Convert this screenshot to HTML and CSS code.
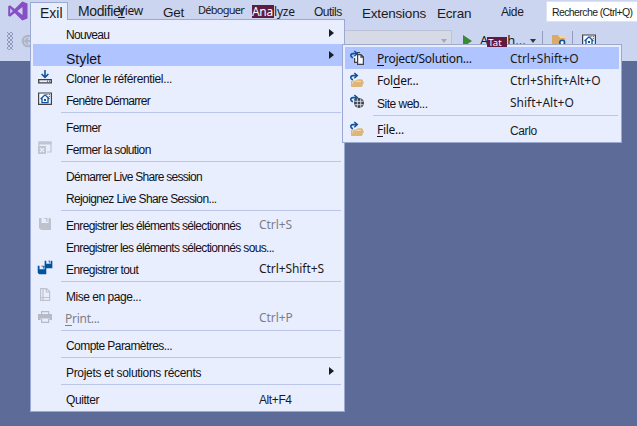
FILE: index.html
```html
<!DOCTYPE html>
<html lang="fr">
<head>
<meta charset="utf-8">
<title>Visual Studio</title>
<link rel="stylesheet" href="styles.css">
</head>
<body>
<svg class="defs" width="0" height="0" aria-hidden="true">
  <symbol id="home" viewBox="0 0 16 16"><path d="M1.6 2h12.8v11.4H1.6z" fill="#f6f8ff" stroke="#424247" stroke-width="1.2"/><path d="M9.5 3.5h1M11.8 3.5h1M11.8 5.4h1" stroke="#424247"/><path d="M3.6 8 8 3.8 12.4 8M5 7.2v4.5h6V7.2" fill="none" stroke="#0f539c" stroke-width="1.3"/><path d="M7 8h2v2H7z" fill="#0f539c"/></symbol>
  <symbol id="folder" viewBox="0 0 16 16"><path d="M2.5 9v5h10V8H8L7 9.2z" fill="#efd5ad" stroke="#dcb67a"/><path d="M4.5 10H15l-2 5H2z" fill="#dcb67a"/><path d="M9 8h4.5v3" fill="none" stroke="#dcb67a"/></symbol>
  <symbol id="open" viewBox="0 0 16 16"><path d="M4 7.6C1 7 1.2 3.6 4 3.6H7.4" fill="none" stroke="#0f539c" stroke-width="1.6"/><path d="M5.3 1l3 2.6-3 2.6" fill="none" stroke="#0f539c" stroke-width="1.5"/></symbol>
  <symbol id="floppy" viewBox="0 0 14 14"><path d="M1 1h2.5v5h7V1H12l1 1v11H3l-2-2z"/><path d="M6.2 1h3.3v4H8.3V2H6.2z"/></symbol>
</svg>
<header class="shell">
  <nav class="menubar">
    <svg class="logo" viewBox="0 0 20 20"><path fill="#864fc4" fill-rule="evenodd" d="M14.3.5 19.5 2.6V17.4L14.3 19.5 6.7 12.1 2 15.8.2 14.8V5.2L2 4.2 6.7 7.9zM14.5 6 9.4 10l5.1 4zM2.2 7.3v5.4L4.9 10z"/></svg>
    <span class="tab exil">Exil</span>
    <span class="tab modifier">Modifier</span>
    <span class="tab view"><u>V</u>iew</span>
    <span class="tab get">Get</span>
    <span class="tab debug">Déboguer</span>
    <span class="tab analyze"><b>Ana</b>lyze</span>
    <span class="tab outils">Outils</span>
    <span class="tab ext">Extensions</span>
    <span class="tab ecran">Ecran</span>
    <span class="tab aide">Aide</span>
    <span class="search">Recherche (Ctrl+Q)</span>
  </nav>
  <div class="toolbar">
    <span class="grip"></span>
    <svg class="back" viewBox="0 0 14 14"><circle cx="7" cy="7" r="5.2" fill="none" stroke="#b0b4c4" stroke-width="2.2"/><path d="M11 7H4m3-3L4 7l3 3" fill="none" stroke="#b0b4c4" stroke-width="1.8"/></svg>
    <span class="combo"><i class="down"></i></span>
    <i class="play"></i>
    <span class="attach">A<b>Tat</b>h...</span>
    <i class="down dark"></i>
    <i class="vline"></i>
    <svg class="tool" viewBox="0 0 16 16"><path d="M1 2h6l1 2h6v11H1z" fill="#d9ab66"/><path d="M9 3h5v2H9z" fill="#efd5ad"/><circle cx="11.2" cy="9.6" r="2.4" fill="#fff" stroke="#0f539c" stroke-width="1.6"/></svg>
    <i class="vline"></i>
    <svg class="tool"><use href="#home"/></svg>
  </div>
</header>

<section class="menu main">
  <div class="row"><span class="ico"></span><span class="label t-nouveau">Nouveau</span><i class="arrow"></i></div>
  <div class="row on"><span class="ico"></span><span class="label t-stylet">Stylet</span><i class="arrow"></i></div>
  <div class="row"><svg class="ico" viewBox="0 0 16 16"><path d="M8 1v7M4.6 5 8 8.4 11.4 5" fill="none" stroke="#0f539c" stroke-width="1.6"/><path d="M1.7 10.6h12.6v3.2H1.7z" fill="none" stroke="#424247" stroke-width="1.3"/><path d="M10 12.2h1m1 0h1" stroke="#424247"/></svg><span class="label t-cloner">Cloner le référentiel...</span></div>
  <div class="row"><svg class="ico"><use href="#home"/></svg><span class="label t-tight">Fenêtre Démarrer</span></div>
  <hr>
  <div class="row"><span class="ico"></span><span class="label">Fermer</span></div>
  <div class="row"><svg class="ico" viewBox="0 0 16 16"><path d="M2 6V2h12v10h-4" fill="none" stroke="#c2c4cf" stroke-width="1.2"/><path d="M1.5 1.5h13v3h-13z" fill="#c2c4cf"/><path d="M1 6h8v8H1z" fill="#c2c4cf"/><path d="m3 8 4 4m0-4-4 4" stroke="#e9eeff" stroke-width="1.3"/></svg><span class="label">Fermer la solution</span></div>
  <hr>
  <div class="row"><span class="ico"></span><span class="label t-live">Démarrer Live Share session</span></div>
  <div class="row"><span class="ico"></span><span class="label">Rejoignez Live Share Session...</span></div>
  <hr>
  <div class="row off"><svg class="ico" viewBox="0 0 16 16"><use href="#floppy" x="1" y="1" width="14" height="14" fill="#bfc2cd"/></svg><span class="label t-black">Enregistrer les éléments sélectionnés</span><span class="key">Ctrl+S</span></div>
  <div class="row"><span class="ico"></span><span class="label t-black">Enregistrer les éléments sélectionnés sous...</span></div>
  <div class="row"><svg class="ico" viewBox="0 0 16 16"><use href="#floppy" x="7" y="0" width="9" height="9" fill="#00539c"/><use href="#floppy" x="0" y="5" width="10" height="10" fill="#00539c"/></svg><span class="label t-tout">Enregistrer tout</span><span class="key">Ctrl+Shift+S</span></div>
  <hr>
  <div class="row"><svg class="ico" viewBox="0 0 16 16"><path d="M3.6 1.6h6l3 3v8.8h-9zM9.3 2v3h3M6 2v11M4 10.5h8" fill="none" stroke="#bfc2cd" stroke-width="1.2"/></svg><span class="label t-mise">Mise en page...</span></div>
  <div class="row off"><svg class="ico" viewBox="0 0 16 16"><path d="M4.6 5V2.6h7V5M4.6 10v3.4h7V10" fill="none" stroke="#b7bac6" stroke-width="1.2"/><path d="M1 5h14v6h-2.5V9.5h-9V11H1z" fill="#b7bac6"/></svg><span class="label ui"><u>P</u>rint...</span><span class="key">Ctrl+P</span></div>
  <hr>
  <div class="row"><span class="ico"></span><span class="label t-compte">Compte Paramètres...</span></div>
  <hr>
  <div class="row"><span class="ico"></span><span class="label t-projets">Projets et solutions récents</span><i class="arrow"></i></div>
  <hr>
  <div class="row"><span class="ico"></span><span class="label t-quitter">Quitter</span><span class="key alt">Alt+F4</span></div>
</section>

<section class="menu sub">
  <div class="row on"><svg class="ico" viewBox="0 0 16 16"><path d="M5 3h5l1 1h2l2 2v9H8v-2H5z" fill="#f8f9ff"/><path d="M5.6 8v4.4H8M8 2.6h3M8.6 4.6h3.6l2.2 2.2v7.6H8.6zM12 4.8v2.4h2.2" fill="none" stroke="#424247" stroke-width="1.2"/><use href="#open"/></svg><span class="label ui"><u>P</u>roject/Solution...</span><span class="key">Ctrl+Shift+O</span></div>
  <div class="row"><svg class="ico" viewBox="0 0 16 16"><use href="#folder"/><use href="#open"/></svg><span class="label ui folder">Fol<u>d</u>er...</span><span class="key">Ctrl+Shift+Alt+O</span></div>
  <div class="row"><svg class="ico" viewBox="0 0 16 16"><circle cx="10" cy="9" r="5" fill="#424247"/><path d="M5.5 7.3h9M5.5 10.7h9M8.3 4.5v9M11.7 4.5v9" stroke="#e9eeff" stroke-width=".8"/><use href="#open"/></svg><span class="label t-site">Site web...</span><span class="key">Shift+Alt+O</span></div>
  <hr>
  <div class="row"><svg class="ico" viewBox="0 0 16 16"><use href="#folder"/><use href="#open"/></svg><span class="label ui"><u>F</u>ile...</span><span class="key carlo">Carlo</span></div>
</section>
</body>
</html>
```
FILE: styles.css
```css
* { box-sizing: border-box; }
body {
  margin: 0;
  height: 426px;
  overflow: hidden;
  background: #5d6b99;
  color: #1b1b20;
  font: 12px/22px "Liberation Sans", Arial, sans-serif;
}
.defs { position: absolute; }
b { font-weight: normal; color: #fff; background: #5f1c43; }
u { text-decoration-thickness: 1px; text-underline-offset: 2px; }

.shell { height: 61px; background: #ccd5f0; }
.menubar { display: flex; height: 30px; white-space: nowrap; }
.logo { flex: none; width: 20px; height: 20px; margin: 1px 2px 0 8px; }
.tab { flex: none; height: 24px; }
.exil { position: relative; z-index: 2; width: 38px; height: 18px; margin-top: 2px; padding-left: 9px; border: 1px solid #9ba8d2; border-bottom: 0; background: #e9eeff; font-size: 14px; line-height: 20px; }
.modifier { width: 50px; padding-left: 10px; font-size: 14px; letter-spacing: -.4px; }
.view { width: 45px; font: 12px/22px "Noto Sans", sans-serif; letter-spacing: -.4px; }
.get { width: 35px; padding-top: 2px; font-size: 13.5px; letter-spacing: -.3px; }
.debug { width: 54px; font: 11px/20px "Noto Sans", sans-serif; letter-spacing: -.75px; }
.analyze { width: 62px; padding-top: 5px; font: 12px/13px "Noto Sans", sans-serif; letter-spacing: -.2px; }
.analyze b { display: inline-block; width: 22px; height: 13px; letter-spacing: -.3px; }
.outils { width: 48px; padding-top: 1px; letter-spacing: -.5px; }
.ext { width: 75px; padding-top: 3px; font-size: 13.5px; letter-spacing: -.2px; }
.ecran { width: 64px; padding-top: 3px; font-size: 13.5px; letter-spacing: -.2px; }
.aide { width: 45px; padding-top: 1px; letter-spacing: -.4px; }
.search { flex: none; width: 92px; height: 21px; margin-top: 1px; padding-left: 5px; border: 1px solid #dce2f5; background: #fff; font-size: 10.5px; line-height: 21px; letter-spacing: -.6px; }

.toolbar { display: flex; height: 22px; align-items: center; }
.grip {
  width: 6px; height: 18px; margin: 0 8px 0 7px;
  background: radial-gradient(circle, #7a85ab .6px, transparent 1px) 0 0 / 4px 4px,
    radial-gradient(circle, #7a85ab .6px, transparent 1px) 2px 2px / 4px 4px;
}
.back { flex: none; width: 14px; height: 14px; }
.combo { display: flex; width: 417px; height: 22px; align-items: center; justify-content: flex-end; padding-right: 4px; border: 1px solid #bcc3d8; background: #d5dae6; }
.down { border: 3px solid transparent; border-top: 4px solid #a5a9b7; border-bottom: 0; }
.down.dark { border-top-color: #33343e; margin: 0 6px 0 7px; }
.play { margin: 0 8px 0 11px; border: 6px solid transparent; border-left: 9px solid #388a34; border-right: 0; }
.attach { display: flex; width: 43px; height: 22px; margin-top: -2px; font: 13px/22px "Noto Sans", sans-serif; }
.attach b { position: relative; z-index: 3; flex: none; width: 20px; height: 10px; margin: 8px 0 0 -1px; padding-left: 1px; font-size: 9.5px; line-height: 11px; }
.vline { width: 1px; height: 20px; background: #929dc0; margin-right: 8px; }
.tool { flex: none; width: 16px; height: 16px; margin: 0 5px 0 0; }

.menu { position: absolute; border: 1px solid #9ba8d2; background: #e9eeff; }
.main { left: 30px; top: 19px; width: 315px; height: 393px; padding: 2px; }
.sub { left: 342px; top: 44px; width: 280px; height: 99px; padding: 2px; }
.row { display: flex; height: 22px; align-items: center; white-space: nowrap; }
.row.on { background: #b0c4ff; }
.main .on { margin-right: -2px; }
.main .on .arrow { margin-right: 10px; }
.off { color: #7d7e88; }
.ico { flex: none; width: 16px; height: 16px; margin: 0 13px 0 4px; }
.label { width: 193px; padding-top: 5px; line-height: 19px; letter-spacing: -.63px; color: #111116; }
.off .ui { color: #7d7e88; }
.key { padding-top: 2px; }
.key, .ui { font-family: "Noto Sans", sans-serif; letter-spacing: -.07px; }
.ui { margin-left: -1px; margin-right: 1px; padding-top: 2px; letter-spacing: -.27px; }
.arrow { margin: 0 8px 0 auto; border: 4px solid transparent; border-left: 5px solid #1b1b20; border-right: 0; }
hr { height: 1px; margin: 2px 1px 2px 28px; border: 0; background: #bbc5e8; }

.sub .label { width: 133px; }
.sub .key { margin-left: -1px; padding-top: 1px; letter-spacing: 0; }
.sub .ui { padding-top: 0; }
.sub .folder { letter-spacing: -.2px; }
.t-nouveau { letter-spacing: -.7px; }
.t-stylet { font-size: 14px; letter-spacing: 0; padding-top: 8px; }
.t-cloner { letter-spacing: -.36px; }
.t-tight { letter-spacing: -.71px; }
.t-live { letter-spacing: -.72px; }
.t-black { color: #111116; letter-spacing: -.67px; }
.t-tout { letter-spacing: -.62px; }
.t-mise { letter-spacing: -.47px; }
.t-compte { letter-spacing: -.57px; }
.t-projets { letter-spacing: -.32px; }
.t-quitter { letter-spacing: -.43px; }
.sub .t-site { margin-left: -1px; margin-right: 1px; letter-spacing: -.5px; }
.key.alt, .sub .carlo { font-family: "Liberation Sans", sans-serif; padding-top: 4px; letter-spacing: -.4px; }
```
